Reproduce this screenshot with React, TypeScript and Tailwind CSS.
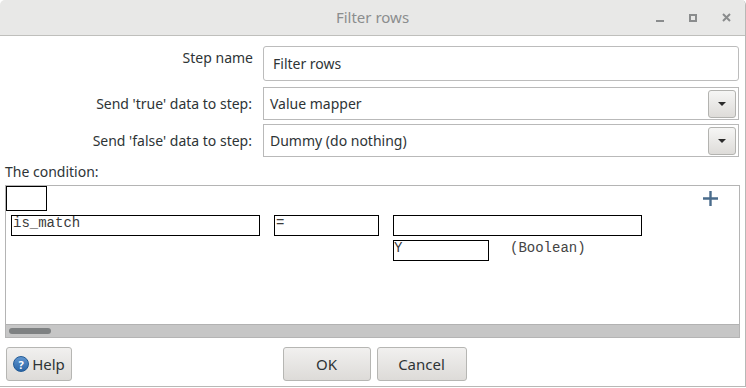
import React from "react";

const sans = { fontFamily: "'Noto Sans', 'Open Sans', sans-serif" };

function DropButton() {
  return (
    <div className="w-[28px] h-[28px] mr-[2px] rounded-[3px] border border-[#b3b3b0] bg-gradient-to-b from-[#f6f6f5] to-[#dedcd9] flex items-center justify-center">
      <svg width="10" height="6" viewBox="0 0 10 6">
        <path d="M1 1 L9 1 L5 5 Z" fill="#2b2b2b" />
      </svg>
    </div>
  );
}

function Combo({ value }: { value: string }) {
  return (
    <div className="h-[33px] mr-[1px] border border-[#b9b9b9] bg-white flex items-center justify-between">
      <span className="pl-[6px] text-[14px] text-[#2e3436]">{value}</span>
      <DropButton />
    </div>
  );
}

function Button({ children, w }: { children: React.ReactNode; w: string }) {
  return (
    <button
      className={`${w} h-[34px] rounded-[3px] border border-[#b6b6b3] bg-gradient-to-b from-[#f1f0ef] to-[#dddbd8] flex items-center justify-center gap-[3px] text-[15px] text-[#2e3436]`}
    >
      {children}
    </button>
  );
}

export default function App() {
  const mono = { fontFamily: "'Liberation Mono', 'DejaVu Sans Mono', monospace" };

  return (
    <div className="w-[746px] h-[388px] bg-white" style={sans}>
      <div className="h-[387px] flex flex-col border-r border-b border-[#b8b8b6] rounded-tl-[5px] rounded-tr-[5px] overflow-hidden">
        {/* Title bar */}
        <div className="h-[36px] shrink-0 bg-[#e8e8e7] border-b border-[#bfbfbc] grid grid-cols-[1fr_auto_1fr] items-center">
          <div />
          <span className="text-[15px] text-[#8b8d8e]">Filter rows</span>
          <div className="flex items-center justify-end gap-[25px] pr-[14px]">
            <span className="block w-[8px] h-[2px] mt-[6px] bg-[#8a8c8d]" />
            <span className="block w-[8px] h-[8px] border-2 border-[#8a8c8d]" />
            <svg width="9" height="9" viewBox="0 0 9 9">
              <path d="M1 1 L8 8 M8 1 L1 8" stroke="#8a8c8d" strokeWidth="2" />
            </svg>
          </div>
        </div>

        {/* Form */}
        <div className="flex-1 flex flex-col pl-[5px] pr-[5px]">
          <div className="grid grid-cols-[248px_1fr] gap-x-[10px] mt-[10px]">
            <span className="text-right text-[14px] text-[#2e3436] pt-[1px]">Step name</span>
            <div className="h-[35px] mr-[1px] rounded-[3px] border border-[#bcbcbc] bg-white flex items-center pl-[9px] text-[14px] text-[#2e3436]">
              Filter rows
            </div>
          </div>

          <div className="grid grid-cols-[248px_1fr] gap-x-[10px] mt-[6px] items-center">
            <span className="text-right text-[14px] text-[#2e3436] pr-[1px]">Send 'true' data to step:</span>
            <Combo value="Value mapper" />
          </div>

          <div className="grid grid-cols-[248px_1fr] gap-x-[10px] mt-[4px] items-center">
            <span className="text-right text-[14px] text-[#2e3436] pr-[1px]">Send 'false' data to step:</span>
            <Combo value="Dummy (do nothing)" />
          </div>

          <div className="h-[28px] flex items-center text-[14px] text-[#2e3436]">The condition:</div>

          {/* Condition canvas */}
          <div className="h-[153px] border border-[#b4b4b4] bg-white flex flex-col">
            <div className="h-[25px] flex items-center justify-between">
              <div className="w-[41px] h-[25px] border border-black" />
              <svg width="15" height="15" viewBox="0 0 15 15" className="mr-[21px]">
                <path d="M7.5 0 V15 M0 7.5 H15" stroke="#4a6c8c" strokeWidth="2.4" />
              </svg>
            </div>

            <div className="flex mt-[4px] pl-[5px] text-[14px] leading-[15px] text-[#3a3a3a]" style={mono}>
              <div className="w-[249px] h-[21px] border border-black pl-[1px]">is_match</div>
              <div className="w-[105px] h-[21px] ml-[14px] border border-black pl-[1px]">=</div>
              <div className="w-[249px] h-[21px] ml-[14px] border border-black" />
            </div>

            <div className="flex items-start mt-[4px] pl-[387px] text-[14px] leading-[15px] text-[#3a3a3a]" style={mono}>
              <div className="w-[96px] h-[21px] border border-black">Y</div>
              <span className="ml-[21px] pt-[1px] text-[#444]">(Boolean)</span>
            </div>

            <div className="flex-1" />
            <div className="h-[13px] bg-[#c6c6c6] border-t border-[#b2b2b2] flex items-center pl-[3px]">
              <div className="w-[42px] h-[6px] rounded-full bg-[#7e8182]" />
            </div>
          </div>

          {/* Buttons */}
          <div className="grid grid-cols-[1fr_auto_1fr] mt-[9px] items-center">
            <div className="pl-[1px]">
              <Button w="w-[66px]">
                <span className="w-[16px] h-[16px] rounded-full bg-gradient-to-b from-[#5f95cf] to-[#2a65a6] border border-[#215a96] flex items-center justify-center text-white text-[11px] font-bold leading-none">
                  ?
                </span>
                <span>Help</span>
              </Button>
            </div>
            <div className="flex gap-[6px] pl-[4px]">
              <Button w="w-[88px]">OK</Button>
              <Button w="w-[90px]">Cancel</Button>
            </div>
            <div />
          </div>
        </div>
      </div>
    </div>
  );
}
